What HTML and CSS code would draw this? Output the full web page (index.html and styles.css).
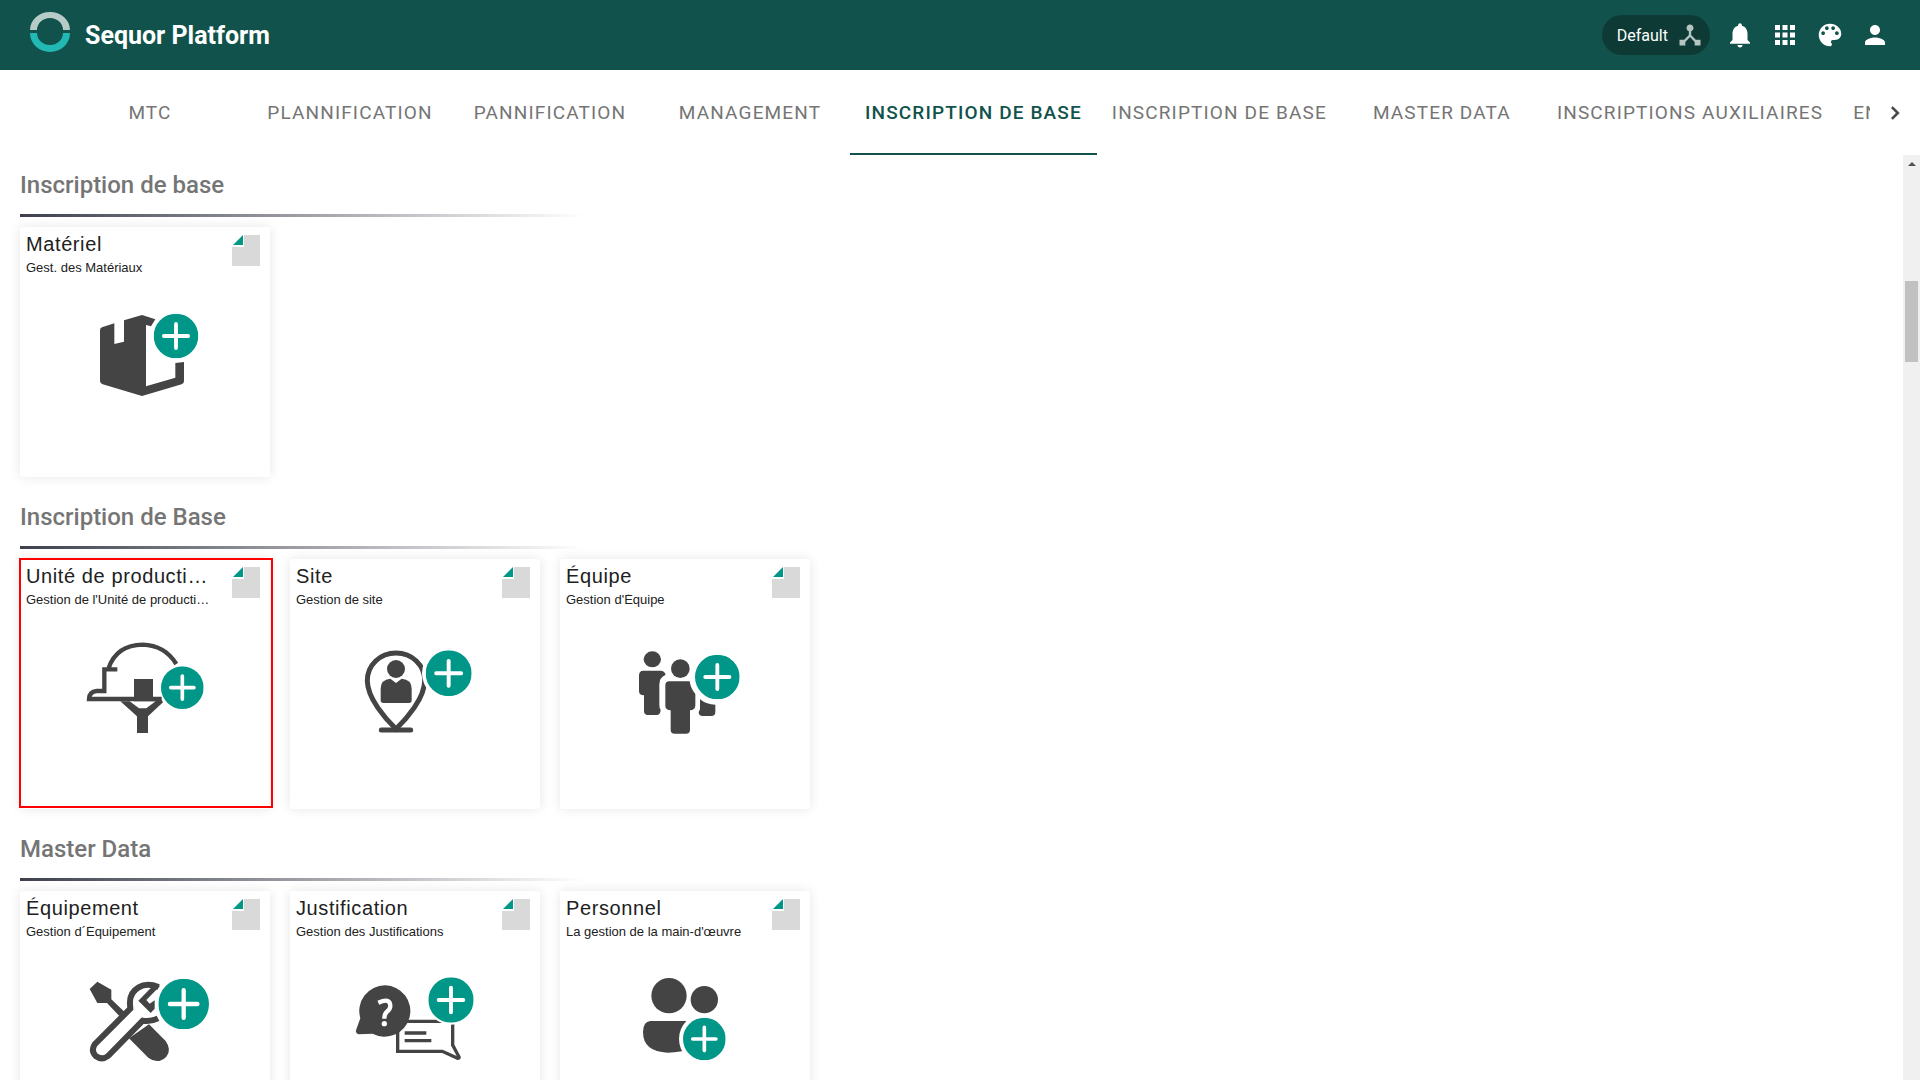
FILE: index.html
```html
<!DOCTYPE html>
<html lang="fr">
<head>
  <meta charset="UTF-8" />
  <meta name="viewport" content="width=device-width, initial-scale=1" />
  <title>Sequor Platform</title>
  <link rel="stylesheet" href="styles.css">
</head>
<body>
  <!-- Shared shapes -->
  <svg class="sprite" aria-hidden="true">
    <symbol id="plus" viewBox="0 0 140 140">
      <circle cx="70" cy="70" r="70" fill="#009688"/>
      <path d="M70 32v76M32 70h76" stroke="#fff" stroke-width="12" stroke-linecap="round"/>
    </symbol>
    <symbol id="page" viewBox="0 0 28 31">
      <path d="M12 0h16v31H0V12h12z" fill="#d9d9d9"/>
      <path d="M11 0v10H1z" fill="#009688"/>
    </symbol>
  </svg>

  <header class="topbar">
    <a class="brand" href="#">
      <svg class="logo" viewBox="0 0 40 40" aria-hidden="true">
        <path d="M0 18a20 18 0 0 1 40 0h-7a13 12 0 0 0-26 0z" fill="#b7cbc9"/>
        <path d="M0 21a20 19 0 0 0 40 0h-7a13 12 0 0 1-26 0z" fill="#22b9b5"/>
      </svg>
      <span class="brand-name">Sequor Platform</span>
    </a>
    <div class="actions">
      <button class="profile">
        Default
        <svg viewBox="0 0 24 24" aria-hidden="true"><path d="M17 16l-4-4V8.82C14.16 8.4 15 7.3 15 6c0-1.66-1.34-3-3-3S9 4.34 9 6c0 1.3.84 2.4 2 2.82V12l-4 4H3v5h5v-3.05l4-4.2 4 4.2V21h5v-5h-4z"/></svg>
      </button>
      <button class="icon-btn" aria-label="Notifications">
        <svg viewBox="0 0 24 24"><path d="M12 22c1.1 0 2-.9 2-2h-4c0 1.1.89 2 2 2zm6-6v-5c0-3.07-1.64-5.64-4.5-6.32V4c0-.83-.67-1.5-1.5-1.5s-1.5.67-1.5 1.5v.68C7.63 5.36 6 7.92 6 11v5l-2 2v1h16v-1l-2-2z"/></svg>
      </button>
      <button class="icon-btn" aria-label="Applications">
        <svg viewBox="0 0 24 24"><path d="M4 8h4V4H4v4zm6 12h4v-4h-4v4zm-6 0h4v-4H4v4zm0-6h4v-4H4v4zm6 0h4v-4h-4v4zm6-10v4h4V4h-4zm-6 4h4V4h-4v4zm6 6h4v-4h-4v4zm0 6h4v-4h-4v4z"/></svg>
      </button>
      <button class="icon-btn" aria-label="Thème">
        <svg viewBox="0 0 24 24"><path d="M12 3a9 9 0 0 0 0 18c.83 0 1.5-.67 1.5-1.5 0-.39-.15-.74-.39-1.01-.23-.26-.38-.61-.38-.99 0-.83.67-1.5 1.5-1.5H16c2.76 0 5-2.24 5-5 0-4.42-4.03-8-9-8zm-5.5 9c-.83 0-1.5-.67-1.5-1.5S5.67 9 6.5 9 8 9.67 8 10.5 7.33 12 6.5 12zm3-4C8.67 8 8 7.33 8 6.5S8.67 5 9.5 5s1.5.67 1.5 1.5S10.33 8 9.5 8zm5 0c-.83 0-1.5-.67-1.5-1.5S13.67 5 14.5 5s1.5.67 1.5 1.5S15.33 8 14.5 8zm3 4c-.83 0-1.5-.67-1.5-1.5S16.67 9 17.5 9s1.5.67 1.5 1.5-.67 1.5-1.5 1.5z"/></svg>
      </button>
      <button class="icon-btn" aria-label="Compte">
        <svg viewBox="0 0 24 24"><path d="M12 12c2.21 0 4-1.79 4-4s-1.79-4-4-4-4 1.79-4 4 1.79 4 4 4zm0 2c-2.67 0-8 1.34-8 4v2h16v-2c0-2.66-5.33-4-8-4z"/></svg>
      </button>
    </div>
  </header>

  <nav class="tabbar">
    <div class="tabs">
      <a class="tab" href="#">MTC</a>
      <a class="tab" href="#">Plannification</a>
      <a class="tab" href="#">Pannification</a>
      <a class="tab" href="#">Management</a>
      <a class="tab active" href="#" aria-current="page">Inscription de base</a>
      <a class="tab" href="#">Inscription de base</a>
      <a class="tab" href="#">Master Data</a>
      <a class="tab" href="#">Inscriptions auxiliaires</a>
      <a class="tab" href="#">En</a>
    </div>
    <button class="tab-next" aria-label="Suivant">
      <svg viewBox="0 0 24 24"><path d="M10 6L8.59 7.41 13.17 12l-4.58 4.59L10 18l6-6z"/></svg>
    </button>
  </nav>

  <div class="page">
    <main class="content">
      <section class="group">
        <h2>Inscription de base</h2>
        <hr>
        <div class="cards">
          <a class="card" href="#">
            <div class="card-head">
              <div class="card-text"><h3>Matériel</h3><p>Gest. des Matériaux</p></div>
              <svg class="corner" aria-hidden="true"><use href="#page"/></svg>
            </div>
            <!-- box -->
            <svg class="picture" viewBox="210 246 450 330" aria-hidden="true">
              <path d="M306 322L343 310V372L372 365V301L426 285L466 298L453 319L438 315V499L526 473V429L552 426V483Q552 491 545 493L426 528L308 493Q300 490 300 482V331Q300 324 306 322z" fill="#444"/>
              <use href="#plus" x="461" y="281" width="134" height="134"/>
            </svg>
          </a>
        </div>
      </section>

      <section class="group">
        <h2>Inscription de Base</h2>
        <hr>
        <div class="cards">
          <a class="card selected" href="#">
            <div class="card-head">
              <div class="card-text"><h3>Unité de production</h3><p>Gestion de l'Unité de production</p></div>
              <svg class="corner" aria-hidden="true"><use href="#page"/></svg>
            </div>
            <!-- hard hat -->
            <svg class="picture" viewBox="210 432 450 330" aria-hidden="true">
              <path d="M326 534Q350 465 428 464Q494 466 529 522M352 538H313V603H290Q268 605 267 627H485" fill="none" stroke="#444" stroke-width="13"/>
              <path d="M402 567h57v54h20l10 16-45 42v50h-33v-50l-50-45h28l28 21h22l28-21h-65z" fill="#444"/>
              <use href="#plus" x="483" y="529" width="128" height="128"/>
            </svg>
          </a>
          <a class="card" href="#">
            <div class="card-head">
              <div class="card-text"><h3>Site</h3><p>Gestion de site</p></div>
              <svg class="corner" aria-hidden="true"><use href="#page"/></svg>
            </div>
            <!-- map pin -->
            <svg class="picture" viewBox="180 252 450 330" aria-hidden="true">
              <path d="M348 537C318 508 262 445 262 392C262 345 300 309 348 309C396 309 434 345 434 392C434 445 378 508 348 537z" fill="none" stroke="#444" stroke-width="15"/>
              <path d="M304 540h88" stroke="#444" stroke-width="15" stroke-linecap="round"/>
              <circle cx="348" cy="357" r="27" fill="#444"/>
              <path d="M302 417Q302 388 331 386L348 399L365 386Q395 388 395 417V451Q395 459 387 459H310Q302 459 302 451z" fill="#444"/>
              <circle cx="506" cy="370" r="80" fill="#fff"/>
              <use href="#plus" x="437" y="301" width="138" height="138"/>
            </svg>
          </a>
          <a class="card" href="#">
            <div class="card-head">
              <div class="card-text"><h3>Équipe</h3><p>Gestion d'Équipe</p></div>
              <svg class="corner" aria-hidden="true"><use href="#page"/></svg>
            </div>
            <!-- team -->
            <svg class="picture" viewBox="180 252 450 330" aria-hidden="true">
              <g fill="#444">
                <ellipse cx="307" cy="328" rx="26" ry="24"/>
                <path d="M280 362H334Q344 363 347 374Q328 382 328 404V465Q328 474 332 480Q331 495 320 495H294Q282 495 282 483V436Q267 436 267 423V376Q267 362 280 362z"/>
                <circle cx="391" cy="356" r="28"/>
                <path d="M358 394H419Q422 416 436 432V467Q435 480 420 481V539Q420 551 408 551H374Q362 551 362 539V481Q346 480 346 467V406Q346 394 358 394z"/>
                <path d="M450 448Q470 464 496 464V486Q496 498 484 498H458Q446 498 446 486L450 478z"/>
              </g>
              <use href="#plus" x="435" y="314" width="134" height="134"/>
            </svg>
          </a>
        </div>
      </section>

      <section class="group">
        <h2>Master Data</h2>
        <hr>
        <div class="cards">
          <a class="card" href="#">
            <div class="card-head">
              <div class="card-text"><h3>Équipement</h3><p>Gestion d´Équipement</p></div>
              <svg class="corner" aria-hidden="true"><use href="#page"/></svg>
            </div>
            <!-- tools -->
            <svg class="picture" viewBox="210 438 450 330" aria-hidden="true">
              <path d="M292 485L334 509V538L373 575L358 588L321 549H292L269 507z" fill="#444"/>
              <path d="M387 655L447 613L497 663Q516 690 499 710Q473 735 445 713z" fill="#444"/>
              <path d="M476 501Q440 487 416 502Q388 518 390 552L391 566L284 673Q272 692 287 708Q306 722 324 708L428 602Q452 606 474 595" fill="none" stroke="#444" stroke-width="18"/>
              <path d="M480 498L439 540L449 551L464 541V566L452 579L415 542L462 494z" fill="#444"/>
              <circle cx="551" cy="552" r="80" fill="#fff"/>
              <use href="#plus" x="475" y="476" width="152" height="152"/>
            </svg>
          </a>
          <a class="card" href="#">
            <div class="card-head">
              <div class="card-text"><h3>Justification</h3><p>Gestion des Justifications</p></div>
              <svg class="corner" aria-hidden="true"><use href="#page"/></svg>
            </div>
            <!-- question and answer -->
            <svg class="picture" viewBox="180 258 450 330" aria-hidden="true">
              <path d="M353 455V514H487L533 535Q541 535 535 527L518 495V432M380 424H485" fill="none" stroke="#444" stroke-width="10"/>
              <path d="M374 459h65M374 482h80" stroke="#444" stroke-width="10"/>
              <path d="M316 316a77 77 0 1 1-38 145l-42 2q-10-2-8-12l13-36A77 77 0 0 1 316 316z" fill="#444"/>
              <path d="M295 368Q331 352 331 378Q331 388 320 396Q313 402 313 416" fill="none" stroke="#fff" stroke-width="13"/>
              <circle cx="313" cy="431" r="8" fill="#fff"/>
              <circle cx="513" cy="360" r="74" fill="#fff"/>
              <use href="#plus" x="445" y="292" width="136" height="136"/>
            </svg>
          </a>
          <a class="card" href="#">
            <div class="card-head">
              <div class="card-text"><h3>Personnel</h3><p>La gestion de la main-d'œuvre</p></div>
              <svg class="corner" aria-hidden="true"><use href="#page"/></svg>
            </div>
            <!-- people -->
            <svg class="picture" viewBox="180 258 450 330" aria-hidden="true">
              <path d="M301 423H420V505Q395 518 353 518Q279 515 279 456Q279 425 301 423z" fill="#444"/>
              <circle cx="463" cy="477" r="76" fill="#fff"/>
              <circle cx="357" cy="347" r="53" fill="#444"/>
              <circle cx="463" cy="359" r="41" fill="#444"/>
              <use href="#plus" x="399" y="413" width="128" height="128"/>
            </svg>
          </a>
        </div>
      </section>
    </main>

    <div class="scrollbar" aria-hidden="true">
      <div class="scroll-up"></div>
      <div class="scroll-thumb"></div>
    </div>
  </div>
</body>
</html>
```
FILE: styles.css
```css
* {
  box-sizing: border-box;
}

body {
  margin: 0;
  height: 100vh;
  display: flex;
  flex-direction: column;
  overflow: hidden;
  background: #fff;
  font-family: Roboto, sans-serif;
  color: #212121;
}

a {
  color: inherit;
  text-decoration: none;
}

button {
  border: none;
  background: none;
  padding: 0;
  font: inherit;
  cursor: pointer;
}

.sprite {
  display: none;
}

/* Top bar */
.topbar {
  display: flex;
  flex: none;
  align-items: center;
  justify-content: space-between;
  height: 70px;
  padding: 0 30px;
  background: #11534c;
  color: #fff;
}

.brand {
  display: flex;
  align-items: center;
  gap: 15px;
}

.logo {
  width: 40px;
  height: 40px;
  margin-bottom: 6px;
}

.brand-name {
  font-size: 25px;
  font-weight: 700;
}

.actions {
  display: flex;
  align-items: center;
  gap: 15px;
}

.profile {
  display: flex;
  align-items: center;
  gap: 8px;
  height: 40px;
  padding: 0 6px 0 15px;
  border-radius: 20px;
  background: #0d3a35;
  color: #fff;
  font-size: 16px;
}

.profile svg {
  width: 28px;
  height: 28px;
  fill: #b6c4c2;
}

.icon-btn svg {
  display: block;
  width: 30px;
  height: 30px;
  fill: #fff;
}

/* Tabs */
.tabbar {
  display: flex;
  flex: none;
  height: 85px;
  padding-left: 50px;
}

.tabs {
  display: flex;
  flex: 1;
  overflow: hidden;
}

.tab {
  display: flex;
  flex: none;
  align-items: center;
  justify-content: center;
  min-width: 200px;
  padding: 2px 15px 0;
  border-bottom: 2px solid transparent;
  color: #757575;
  font-size: 19px;
  letter-spacing: 0.06em;
  text-transform: uppercase;
  white-space: nowrap;
}

.tab:last-child {
  justify-content: flex-start;
}

.tab.active {
  border-color: #11534c;
  color: #11534c;
  font-weight: 500;
}

.tab-next {
  display: flex;
  align-items: center;
  justify-content: center;
  width: 50px;
}

.tab-next svg {
  width: 26px;
  height: 26px;
  fill: #444;
  stroke: #444;
  stroke-width: 0.5;
}

/* Page */
.page {
  display: flex;
  flex: 1;
  min-height: 0;
}

.content {
  display: flex;
  flex: 1;
  flex-direction: column;
  gap: 10px;
  padding: 0 0 0 20px;
  overflow: hidden;
}

.group h2 {
  margin: 0;
  padding-top: 2px;
  color: #757575;
  font-size: 24px;
  font-weight: 500;
  line-height: 57px;
}

.group hr {
  width: 30%;
  height: 3px;
  margin: 0 0 10px;
  border: none;
  background: linear-gradient(to right, #3d404c, transparent);
}

.cards {
  display: flex;
  flex-wrap: wrap;
  gap: 20px;
}

.card {
  position: relative;
  width: 250px;
  height: 250px;
  border-radius: 2px;
  background: #fff;
  box-shadow: 0 0 12px rgba(0, 0, 0, 0.1);
  font-family: "Liberation Sans", Arial, sans-serif;
}

.card.selected::after {
  content: "";
  position: absolute;
  inset: -1px -3px 1px -1px;
  border: 2px solid #f00;
}

.card-head {
  display: flex;
  justify-content: space-between;
  height: 75px;
  padding: 4px 10px 0 6px;
}

.card-text {
  width: 184px;
}

.card h3,
.card p {
  margin: 0;
  overflow: hidden;
  text-overflow: ellipsis;
  white-space: nowrap;
  font-weight: normal;
}

.card h3 {
  font-size: 20px;
  line-height: 26px;
  letter-spacing: 0.03em;
}

.card p {
  margin-top: 5px;
  padding-bottom: 2px;
  font-size: 13px;
  line-height: 11px;
}

.corner {
  width: 28px;
  height: 31px;
  margin-top: 4px;
}

.picture {
  display: block;
  width: 150px;
  height: 110px;
  margin: 0 auto;
}

/* Scroll bar */
.scrollbar {
  display: flex;
  flex-direction: column;
  align-items: center;
  width: 17px;
  background: #f0f0f0;
}

.scroll-up {
  margin-top: 7px;
  border: 4px solid transparent;
  border-top: none;
  border-bottom-color: #505050;
}

.scroll-thumb {
  width: 13px;
  height: 81px;
  margin-top: 115px;
  background: #c1c1c1;
}
```
